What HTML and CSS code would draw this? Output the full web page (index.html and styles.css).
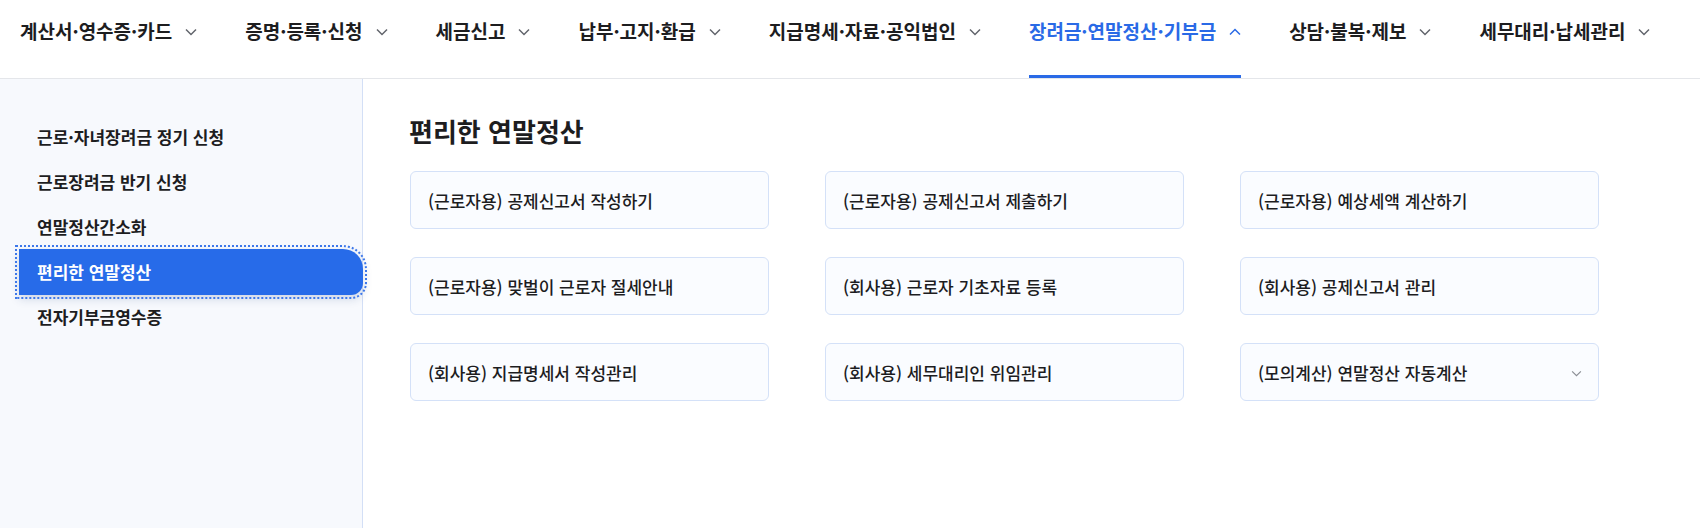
FILE: index.html
```html
<!DOCTYPE html>
<html lang="ko">
<head>
<meta charset="utf-8">
<title>편리한 연말정산</title>
<link rel="stylesheet" href="styles.css">
</head>
<body>
<header class="gnb">
  <nav class="gnb-list">
    <a class="gnb-item">계산서·영수증·카드<svg class="chev" viewBox="0 0 12 8"><polyline points="1,1.5 6,6.5 11,1.5"/></svg></a>
    <a class="gnb-item">증명·등록·신청<svg class="chev" viewBox="0 0 12 8"><polyline points="1,1.5 6,6.5 11,1.5"/></svg></a>
    <a class="gnb-item">세금신고<svg class="chev" viewBox="0 0 12 8"><polyline points="1,1.5 6,6.5 11,1.5"/></svg></a>
    <a class="gnb-item">납부·고지·환급<svg class="chev" viewBox="0 0 12 8"><polyline points="1,1.5 6,6.5 11,1.5"/></svg></a>
    <a class="gnb-item">지급명세·자료·공익법인<svg class="chev" viewBox="0 0 12 8"><polyline points="1,1.5 6,6.5 11,1.5"/></svg></a>
    <a class="gnb-item active">장려금·연말정산·기부금<svg class="chev" viewBox="0 0 12 8"><polyline points="1,6.5 6,1.5 11,6.5"/></svg></a>
    <a class="gnb-item">상담·불복·제보<svg class="chev" viewBox="0 0 12 8"><polyline points="1,1.5 6,6.5 11,1.5"/></svg></a>
    <a class="gnb-item">세무대리·납세관리<svg class="chev" viewBox="0 0 12 8"><polyline points="1,1.5 6,6.5 11,1.5"/></svg></a>
  </nav>
</header>
<div class="body">
  <aside class="lnb">
    <ul class="lnb-list">
      <li class="lnb-item">근로·자녀장려금 정기 신청</li>
      <li class="lnb-item">근로장려금 반기 신청</li>
      <li class="lnb-item">연말정산간소화</li>
      <li class="lnb-item current">편리한 연말정산</li>
      <li class="lnb-item">전자기부금영수증</li>
    </ul>
  </aside>
  <main class="content">
    <h1 class="title">편리한 연말정산</h1>
    <div class="cards">
      <a class="card">(근로자용) 공제신고서 작성하기</a>
      <a class="card">(근로자용) 공제신고서 제출하기</a>
      <a class="card">(근로자용) 예상세액 계산하기</a>
      <a class="card">(근로자용) 맞벌이 근로자 절세안내</a>
      <a class="card">(회사용) 근로자 기초자료 등록</a>
      <a class="card">(회사용) 공제신고서 관리</a>
      <a class="card">(회사용) 지급명세서 작성관리</a>
      <a class="card">(회사용) 세무대리인 위임관리</a>
      <a class="card has-sub">(모의계산) 연말정산 자동계산<svg class="card-chev" viewBox="0 0 12 8"><polyline points="1,1.5 6,6.5 11,1.5"/></svg></a>
    </div>
  </main>
</div>
</body>
</html>
```
FILE: styles.css
```css
* { box-sizing: border-box; }
html, body { margin: 0; padding: 0; }
body {
  font-family: "Noto Sans CJK KR", "Noto Sans", sans-serif;
  color: #1d1d1f;
  background: #fff;
  width: 1700px;
  height: 528px;
  overflow: hidden;
  display: flex;
  flex-direction: column;
}
.gnb {
  height: 79px;
  border-bottom: 1px solid #e4e6ea;
  flex: none;
}
.gnb-list {
  display: flex;
  padding-left: 20px;
  gap: 48px;
  height: 78px;
}
.gnb-item {
  display: flex;
  align-items: flex-start;
  padding-top: 17.5px;
  height: 78px;
  font-size: 19px;
  line-height: 26px;
  font-weight: 600;
  color: #1d1d1f;
  white-space: nowrap;
  border-bottom: 3px solid transparent;
}
.gnb-item.active {
  color: #2a6ae6;
  border-bottom-color: #2a6ae6;
}
.chev {
  width: 12px;
  height: 8px;
  margin-left: 13px;
  margin-top: 10.5px;
  fill: none;
  stroke: #62656c;
  stroke-width: 1.5;
}
.active .chev { stroke: #2a6ae6; }
.body {
  flex: 1;
  display: flex;
}
.lnb {
  width: 363px;
  flex: none;
  background: #f7f9fd;
  border-right: 1px solid #d3dff6;
  padding-top: 35px;
}
.lnb-list {
  list-style: none;
  margin: 0;
  padding: 0 0 0 19px;
}
.lnb-item {
  height: 45px;
  line-height: 45px;
  padding-left: 18px;
  font-size: 17px;
  font-weight: 600;
  color: #1d1d1f;
  margin-right: -1px;
}
.lnb-item.current {
  height: 46px;
  line-height: 46px;
  background: #276be9;
  color: #fff;
  border-radius: 0 20px 12px 0;
  outline: 2px dotted #3d78ea;
  outline-offset: 2px;
  box-shadow: 0 4px 10px rgba(30, 60, 120, 0.18);
}
.lnb-item.current + .lnb-item { margin-top: -1px; }
.content {
  flex: 1;
  padding: 32px 0 0 46px;
}
.title {
  margin: 0 0 20px;
  font-size: 26px;
  line-height: 40px;
  font-weight: 700;
  color: #1d1d1f;
}
.cards {
  display: grid;
  grid-template-columns: repeat(3, 359px);
  grid-auto-rows: 58px;
  column-gap: 56px;
  row-gap: 28px;
  padding-left: 1px;
}
.card {
  display: flex;
  align-items: center;
  justify-content: space-between;
  padding: 0 16px 0 17px;
  border: 1px solid #d4e1f8;
  border-radius: 6px;
  background: #fafcff;
  font-size: 17px;
  font-weight: 500;
  color: #1d1d1f;
}
.card-chev {
  width: 11px;
  height: 7px;
  fill: none;
  stroke: #8a8d94;
  stroke-width: 1.3;
  margin-top: 3px;
}
```
